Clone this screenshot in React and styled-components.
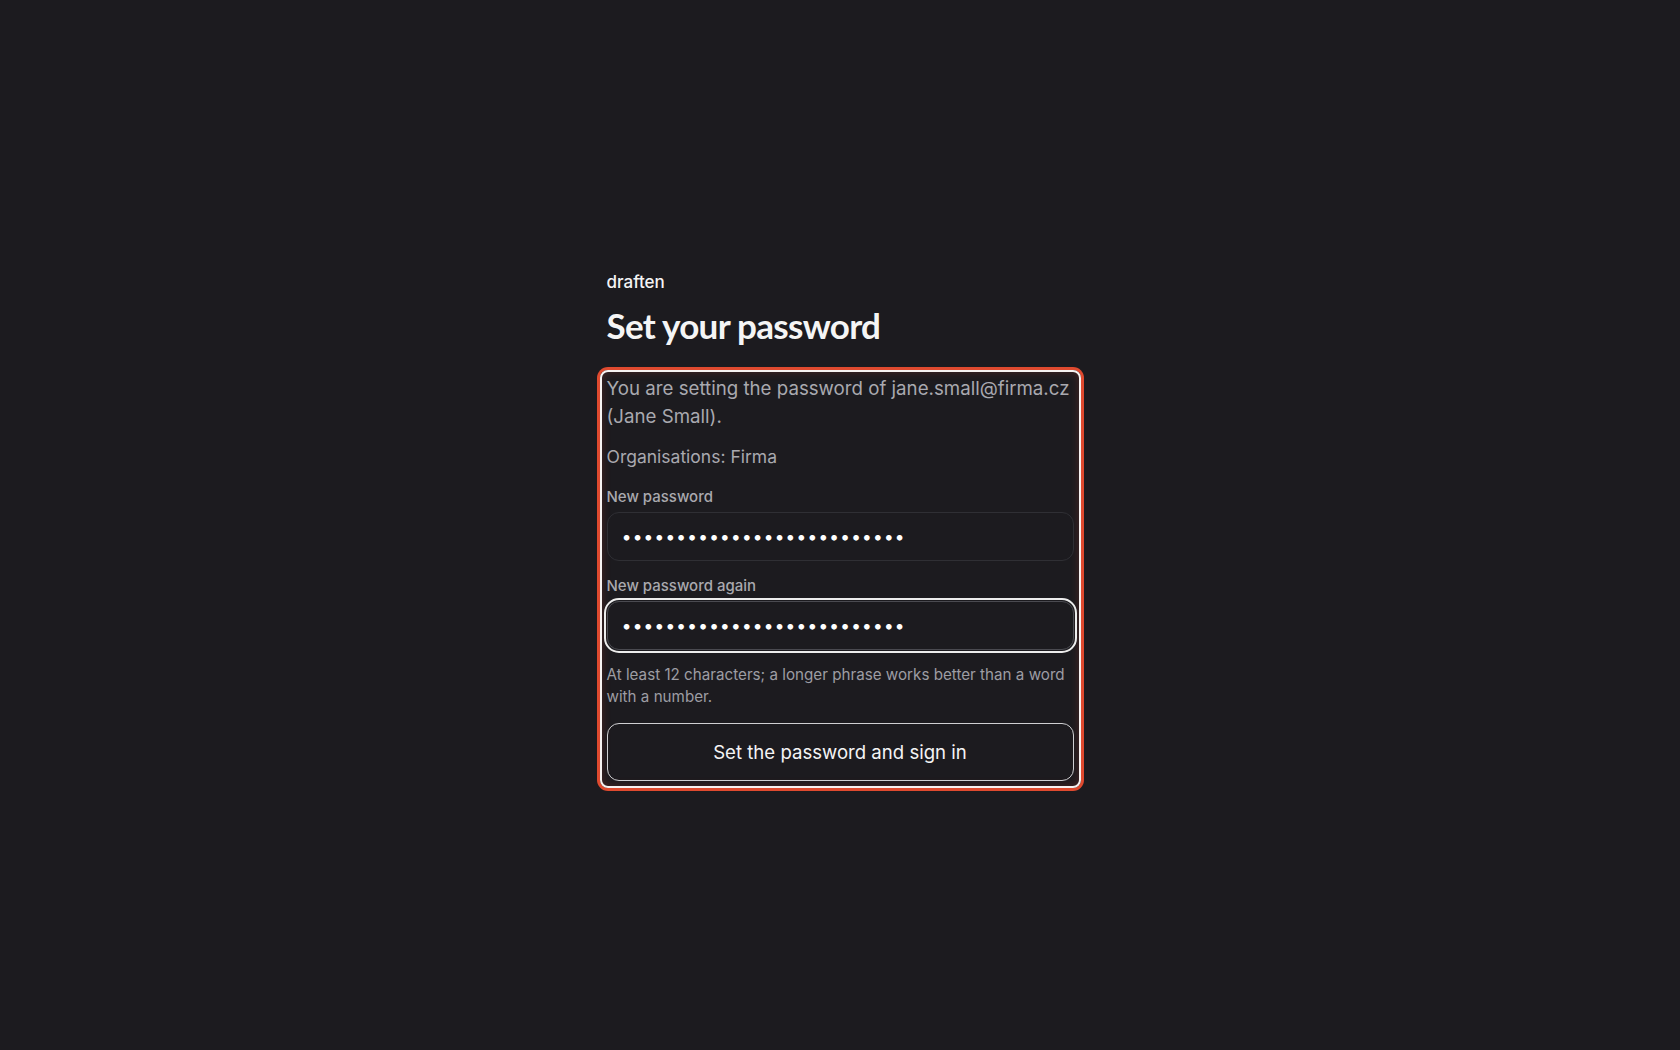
import React from "react";
import styled, { createGlobalStyle } from "styled-components";

const GlobalStyle = createGlobalStyle`
	html, body {
		margin: 0;
		padding: 0;
		background: #1c1b1f;
	}
	body {
		font-family: Inter, "Liberation Sans", sans-serif;
		-webkit-font-smoothing: antialiased;
	}
`;

const Page = styled.div`
	min-height: 100vh;
	display: flex;
	justify-content: center;
	align-items: flex-start;
	padding-top: 270px;
	box-sizing: border-box;
`;

const Column = styled.div`
	width: 467px;
	display: flex;
	flex-direction: column;
`;

const Brand = styled.div`
	font-size: 17px;
	font-weight: 500;
	line-height: 24px;
	color: #f4f4f5;
`;

const Title = styled.h1`
	margin: 10px 0 0;
	font-family: Lato, "Open Sans", sans-serif;
	font-size: 35px;
	font-weight: 700;
	line-height: 42px;
	letter-spacing: -0.7px;
	color: #f5f5f5;
`;

const Frame = styled.form`
	margin: 24px -7px 0;
	padding: 3px 5px 5px;
	border: 2px solid #f6f2f1;
	border-radius: 8px;
	box-shadow: 0 0 0 3px #df4a2f, inset 0 0 8px rgba(190, 60, 45, 0.28);
	display: flex;
	flex-direction: column;
`;

const Intro = styled.p`
	margin: 0;
	font-size: 18.7px;
	line-height: 28px;
	color: #a9a9af;
`;

const Orgs = styled.p`
	margin: 13px 0 0;
	font-size: 17.5px;
	line-height: 26px;
	color: #a9a9af;
`;

const Label = styled.label`
	display: block;
	margin-top: ${(p) => p.$gap}px;
	font-size: 15px;
	font-weight: 500;
	line-height: 20px;
	color: #a9a9ae;
`;

const Input = styled.input`
	display: block;
	box-sizing: border-box;
	width: 100%;
	height: 49px;
	margin-top: 5px;
	padding: 0 14px;
	background: #1c1b1f;
	border: 1px solid ${(p) => (p.$focused ? "#4a4a50" : "#2f2f34")};
	border-radius: 12px;
	color: #ffffff;
	font-family: Inter, "Liberation Sans", sans-serif;
	font-size: 18px;
	letter-spacing: 0.8px;
	outline: ${(p) => (p.$focused ? "2px solid #ececec" : "none")};
	outline-offset: 1px;
`;

const Hint = styled.p`
	margin: 14px 0 0;
	font-size: 15.2px;
	line-height: 22px;
	color: #9d9da3;
`;

const Submit = styled.button`
	margin-top: 15px;
	height: 58px;
	width: 100%;
	background: transparent;
	border: 1.5px solid #cfcfd2;
	border-radius: 12px;
	color: #f4f4f5;
	font-family: Inter, "Liberation Sans", sans-serif;
	font-size: 18.6px;
	font-weight: 400;
	cursor: pointer;
`;

const secret = "abcdefghijklmnopqrstuvwxyz";

export default function App() {
	return (
		<>
			<GlobalStyle />
			<Page>
				<Column>
					<Brand>draften</Brand>
					<Title>Set your password</Title>
					<Frame onSubmit={(e) => e.preventDefault()}>
						<Intro>You are setting the password of jane.small@firma.cz (Jane Small).</Intro>
						<Orgs>Organisations: Firma</Orgs>
						<Label $gap={17} htmlFor="pw1">New password</Label>
						<Input id="pw1" type="password" value={secret} readOnly />
						<Label $gap={15} htmlFor="pw2">New password again</Label>
						<Input id="pw2" type="password" value={secret} readOnly $focused />
						<Hint>At least 12 characters; a longer phrase works better than a word with a number.</Hint>
						<Submit type="submit">Set the password and sign in</Submit>
					</Frame>
				</Column>
			</Page>
		</>
	);
}
